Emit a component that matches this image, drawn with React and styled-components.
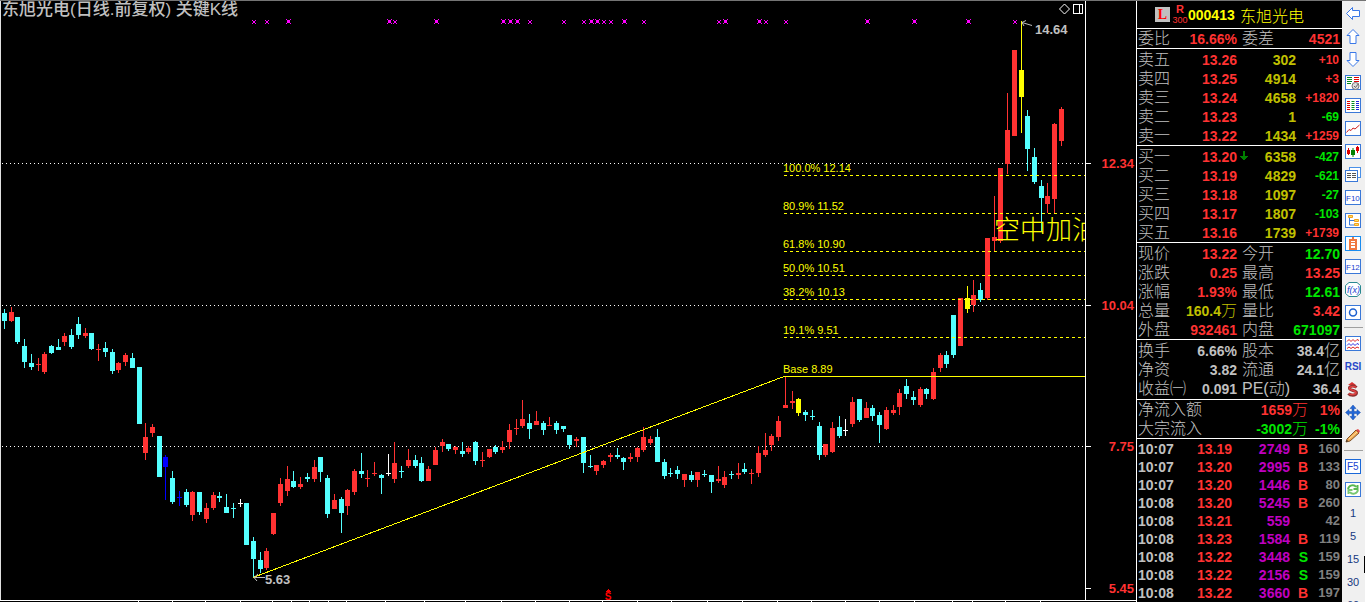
import React from "react";
import styled, { createGlobalStyle } from "styled-components";

const color = {
  red: "#ff3232",
  cyan: "#54ffff",
  green: "#00e600",
  olive: "#c0c000",
  yellow: "#ffff00",
  purple: "#c000c0",
  silver: "#c0c0c0",
  gray: "#808080",
  blue: "#0000ff",
  white: "#ffffff",
  magenta: "#ff00ff",
};

const sans = '"Liberation Sans", "Noto Sans CJK SC", sans-serif';

const GlobalStyle = createGlobalStyle`
  * { box-sizing: border-box; }
  body { margin: 0; background: #000; font-family: ${sans}; }
`;

/* ---------- chart data: [x, high, bodyTop, bodyBottom, low, kind] ---------- */
const kinds = { r: color.red, c: color.cyan, b: color.blue, w: color.white, y: color.yellow };

const candles = [
  [4, 309, 313, 321, 329, "c"], [11, 307, 312, 321, 322, "r"], [17, 317, 317, 342, 344, "c"],
  [24, 339, 346, 362, 368, "c"], [31, 354, 363, 367, 370, "c"], [38, 358, 364, 365, 371, "r"],
  [44, 352, 354, 372, 374, "r"], [51, 345, 346, 353, 354, "c"], [58, 339, 347, 350, 350, "c"],
  [64, 333, 336, 342, 346, "r"], [71, 329, 335, 347, 349, "c"], [78, 317, 324, 335, 339, "c"],
  [85, 328, 333, 336, 338, "r"], [91, 333, 333, 349, 350, "c"], [98, 344, 349, 350, 361, "r"],
  [105, 342, 348, 352, 357, "c"], [112, 349, 352, 371, 374, "c"], [118, 362, 363, 370, 373, "r"],
  [125, 353, 355, 362, 366, "r"], [132, 353, 358, 368, 368, "c"], [139, 367, 367, 424, 424, "c"],
  [145, 423, 437, 453, 460, "r"], [152, 424, 427, 433, 437, "r"], [159, 436, 436, 477, 477, "c"],
  [165, 455, 457, 467, 500, "b"], [172, 471, 478, 502, 504, "c"], [179, 491, 497, 498, 506, "b"],
  [186, 489, 492, 505, 507, "c"], [192, 491, 492, 515, 521, "r"], [199, 492, 492, 512, 515, "c"],
  [206, 503, 508, 519, 523, "r"], [213, 492, 495, 508, 510, "r"], [219, 492, 496, 498, 502, "c"],
  [226, 494, 507, 513, 513, "c"], [233, 503, 508, 509, 518, "c"], [240, 499, 503, 504, 507, "w"],
  [246, 503, 503, 545, 545, "c"], [253, 537, 541, 559, 577, "c"], [260, 552, 560, 569, 573, "c"],
  [266, 548, 551, 568, 570, "r"], [273, 513, 513, 534, 535, "r"], [280, 478, 484, 503, 506, "r"],
  [287, 466, 479, 491, 496, "r"], [293, 471, 481, 487, 488, "c"], [300, 477, 484, 487, 489, "r"],
  [307, 473, 477, 479, 482, "c"], [314, 460, 467, 479, 482, "r"], [320, 457, 457, 472, 482, "c"],
  [327, 475, 478, 514, 518, "c"], [334, 494, 500, 509, 509, "r"], [341, 497, 499, 513, 533, "c"],
  [347, 489, 490, 506, 515, "r"], [354, 469, 471, 492, 495, "r"], [361, 453, 471, 474, 478, "c"],
  [367, 470, 478, 479, 487, "r"], [374, 462, 473, 474, 476, "r"], [381, 474, 475, 478, 494, "c"],
  [388, 454, 473, 474, 476, "w"], [394, 442, 463, 479, 483, "r"], [401, 466, 471, 472, 478, "c"],
  [408, 449, 460, 466, 468, "r"], [415, 455, 460, 466, 468, "c"], [421, 457, 463, 481, 482, "c"],
  [428, 466, 469, 481, 481, "r"], [435, 447, 450, 465, 465, "r"], [442, 439, 442, 446, 452, "r"],
  [448, 444, 444, 449, 451, "c"], [455, 446, 447, 450, 454, "r"], [462, 442, 451, 454, 457, "c"],
  [468, 446, 448, 452, 454, "r"], [475, 441, 442, 461, 465, "c"], [482, 452, 460, 461, 467, "r"],
  [489, 449, 449, 457, 458, "r"], [495, 445, 447, 452, 454, "c"], [502, 441, 447, 450, 453, "r"],
  [509, 424, 430, 442, 449, "r"], [516, 419, 428, 429, 435, "r"], [522, 400, 419, 426, 428, "r"],
  [529, 414, 423, 429, 439, "c"], [536, 411, 421, 425, 425, "r"], [543, 421, 423, 430, 435, "c"],
  [549, 417, 425, 426, 426, "r"], [556, 421, 423, 430, 434, "c"], [563, 426, 426, 429, 432, "c"],
  [569, 435, 435, 445, 449, "c"], [576, 437, 439, 441, 447, "r"], [583, 437, 437, 463, 473, "c"],
  [590, 455, 466, 467, 468, "c"], [596, 465, 465, 471, 475, "r"], [603, 460, 461, 465, 468, "r"],
  [610, 453, 455, 457, 462, "r"], [617, 448, 455, 457, 459, "c"], [623, 457, 458, 462, 470, "c"],
  [630, 453, 457, 459, 462, "r"], [637, 447, 448, 457, 462, "r"], [643, 427, 437, 450, 452, "r"],
  [650, 436, 439, 443, 445, "r"], [657, 429, 437, 462, 462, "c"], [664, 459, 462, 476, 479, "c"],
  [670, 468, 473, 474, 477, "c"], [677, 466, 470, 474, 479, "c"], [684, 474, 474, 480, 487, "r"],
  [691, 471, 475, 480, 482, "c"], [697, 472, 472, 480, 487, "r"], [704, 470, 474, 475, 477, "c"],
  [711, 475, 475, 482, 493, "c"], [718, 466, 479, 481, 483, "r"], [724, 471, 477, 485, 488, "r"],
  [731, 471, 474, 475, 479, "c"], [738, 463, 473, 475, 479, "r"], [744, 463, 469, 472, 474, "c"],
  [751, 469, 473, 474, 484, "r"], [758, 446, 453, 473, 477, "r"], [765, 433, 450, 455, 457, "r"],
  [771, 434, 436, 445, 451, "r"], [778, 416, 421, 437, 441, "r"], [785, 377, 405, 408, 408, "r"],
  [792, 391, 401, 403, 409, "r"], [798, 398, 399, 413, 416, "y"], [805, 410, 412, 415, 421, "c"],
  [812, 410, 416, 417, 420, "c"], [819, 422, 426, 455, 460, "c"], [825, 444, 444, 455, 457, "r"],
  [832, 422, 428, 452, 453, "r"], [839, 416, 427, 436, 438, "c"], [845, 419, 430, 431, 436, "w"],
  [852, 397, 402, 424, 427, "r"], [859, 399, 399, 420, 422, "c"], [866, 402, 408, 418, 418, "r"],
  [872, 405, 408, 416, 421, "c"], [879, 412, 415, 425, 443, "c"], [886, 407, 410, 429, 430, "r"],
  [893, 405, 410, 413, 415, "r"], [899, 389, 393, 407, 415, "r"], [906, 379, 386, 394, 399, "c"],
  [913, 391, 397, 400, 405, "c"], [920, 387, 389, 405, 407, "r"], [926, 388, 389, 394, 399, "c"],
  [933, 368, 372, 399, 400, "r"], [940, 353, 355, 368, 372, "r"], [946, 351, 355, 364, 368, "c"],
  [953, 315, 315, 355, 358, "c"], [960, 298, 298, 346, 346, "r"], [967, 286, 298, 309, 313, "y"],
  [973, 280, 295, 305, 312, "r"], [980, 283, 290, 300, 302, "c"], [987, 238, 238, 298, 300, "r"],
  [994, 196, 237, 241, 251, "r"], [1000, 168, 168, 241, 243, "r"], [1007, 93, 130, 164, 174, "r"],
  [1014, 50, 50, 136, 136, "r"], [1021, 21, 70, 97, 133, "y"], [1027, 110, 116, 149, 171, "c"],
  [1034, 148, 157, 182, 184, "c"], [1041, 180, 186, 198, 231, "c"], [1047, 183, 196, 204, 213, "r"],
  [1054, 123, 124, 199, 213, "r"], [1061, 107, 109, 141, 146, "r"],
];

const smallMarks = [254, 267, 395, 530, 564, 584, 604, 611, 644, 719, 766, 786, 1015];
const largeMarks = [288, 389, 436, 503, 510, 517, 591, 597, 624, 725, 759, 867, 914, 968];

const priceTicks = [
  [163, "12.34"],
  [305, "10.04"],
  [446, "7.75"],
  [588, "5.45"],
];

const fibLines = [
  [175, "100.0% 12.14"],
  [213, "80.9% 11.52"],
  [251, "61.8% 10.90"],
  [275, "50.0% 10.51"],
  [299, "38.2% 10.13"],
  [337, "19.1% 9.51"],
];

const dateTicks = [
  138, 172, 205, 240, 272, 291, 309, 328, 346, 385, 424, 465, 501, 535, 569, 602, 637, 671,
  707, 742, 777, 811, 845, 879, 914, 952, 972, 1005, 1040,
];

/* ---------- chart ---------- */
const Shell = styled.div`
  display: flex;
  height: 100vh;
  min-height: 602px;
  overflow: hidden;
  border-top: 1px solid #747474;
  background: #000;
`;

const ChartPane = styled.main`
  position: relative;
  flex: 1;
  min-width: 0;
  overflow: hidden;
`;

const ChartTitle = styled.h1`
  position: absolute;
  top: 0;
  left: 2px;
  margin: 0;
  font: 500 17px/18px ${sans};
  color: ${color.silver};
  white-space: nowrap;
`;

const ChartSvg = styled.svg`
  display: block;
  width: 100%;
  height: auto;
`;

const FibText = styled.text`
  font: 11px ${sans};
  fill: ${color.yellow};
`;

const PriceText = styled.text`
  font: bold 13px ${sans};
  fill: ${(p) => p.$tone || color.silver};
`;

const EventText = styled.text`
  font: bold 10px ${sans};
  fill: #f00;
`;

const NoteText = styled.text`
  font: 300 26px "Noto Sans CJK SC", sans-serif;
  fill: ${color.yellow};
`;

function Candle({ data: [x, high, top, bottom, low, kind] }) {
  return (
    <g fill={kinds[kind]}>
      <rect x={x} y={high} width="1" height={low - high} />
      <rect x={x - 2} y={top} width="5" height={bottom - top} />
    </g>
  );
}

function Chart() {
  return (
    <ChartSvg viewBox="0 1 1136 601" role="img" aria-label="东旭光电 日线">
      <defs>
        <clipPath id="plot">
          <rect x="0" y="0" width="1085" height="600" />
        </clipPath>
      </defs>
      <g shapeRendering="crispEdges">
        <rect x="0" y="0" width="1" height="601" fill="#e0e0e0" />
        {priceTicks.slice(0, 3).map(([y]) => (
          <line key={y} x1="2" x2="1085" y1={y + 0.5} y2={y + 0.5} stroke="#fff" strokeDasharray="1 3" />
        ))}
        {candles.map((c) => (
          <Candle key={c[0]} data={c} />
        ))}
        {fibLines.map(([y]) => (
          <line key={y} x1="784" x2="1085" y1={y + 0.5} y2={y + 0.5} stroke="#ff0" strokeDasharray="3 3" />
        ))}
        <path d="M253 577.5L784 376.5H1085" fill="none" stroke="#ff0" />
        {smallMarks.map((x) => (
          <path key={x} d={`M${x - 2} 20h1v1h2v-1h1v1h-1v2h1v1h-1v-1h-2v1h-1v-1h1v-2h-1z`} fill={color.magenta} />
        ))}
        {largeMarks.map((x) => (
          <path key={x} d={`M${x - 2} 19h1v1h3v-1h1v1h-1v3h1v1h-1v-1h-3v1h-1v-1h1v-3h-1z`} fill={color.magenta} />
        ))}
        <rect x="1085" y="1" width="1" height="600" fill="#fff" />
        {priceTicks.map(([y]) => (
          <rect key={y} x="1086" y={y} width="5" height="1" fill="#fff" />
        ))}
        <rect x="0" y="600" width="1136" height="1" fill="#fff" />
        {dateTicks.map((x) => (
          <rect key={x} x={x} y="601" width="1" height="1" fill="#fff" />
        ))}
        <path d="M1073.5 4.5h9v9h-9zM1079.5 4.5v9" fill="none" stroke="#fff" />
        <path d="M608 589h1v1h1v1h1v1h-5v-1h1v-1h1z" fill="#f00" />
      </g>
      <path d="M1064.5 4L1069.500 9L1064.500 14L1059.500 9z" fill="none" stroke="#fff" />
      <path d="M1022 22.500L1032 25.500M1026 20.500L1022 22.500L1024 26" fill="none" stroke={color.silver} />
      <path d="M254 577.500H265M258 574L254 577.500L257 581" fill="none" stroke={color.silver} />
      {fibLines.map(([y, label]) => (
        <FibText key={y} x="783" y={y - 3}>{label}</FibText>
      ))}
      <FibText x="783" y="373">Base 8.89</FibText>
      <EventText x="608" y="600" textAnchor="middle">S</EventText>
      <g clipPath="url(#plot)">
        <NoteText x="994" y="239">空中加油</NoteText>
      </g>
      <PriceText x="1035" y="34">14.64</PriceText>
      <PriceText x="265" y="584">5.63</PriceText>
      {priceTicks.map(([y, label]) => (
        <PriceText key={y} x="1134" y={y + 5} textAnchor="end" $tone={color.red}>{label}</PriceText>
      ))}
    </ChartSvg>
  );
}

/* ---------- quote panel ---------- */
const Quote = styled.aside`
  flex: 0 0 206px;
  border-left: 1px solid #fff;
  overflow: hidden;
`;

const QuoteHead = styled.header`
  display: flex;
  align-items: center;
  height: 28px;
  padding: 0 0 0 18px;
  border-bottom: 1px solid #fff;
  color: ${color.yellow};
`;

const MarginBadge = styled.span`
  width: 15px;
  height: 15px;
  background: ${color.silver};
  color: #f00;
  font: bold 14px/15px "Liberation Serif", serif;
  text-align: center;
`;

const IndexBadge = styled.span`
  display: grid;
  row-gap: 1px;
  width: 18px;
  padding-left: 2px;
  color: ${color.red};
  font-size: 9px;
  line-height: 10px;
  text-align: center;

  b { font-size: 11px; }
`;

const StockCode = styled.b`
  width: 52px;
  font-size: 14px;
`;

const StockName = styled.span`
  font-size: 16px;
  font-weight: 300;
`;

const Section = styled.section`
  padding: ${(p) => (p.$tight ? 0 : 1)}px 0 ${(p) => p.$bottom || 0}px 1px;
  border-bottom: ${(p) => (p.$last ? 0 : 1)}px solid #fff;
`;

const Table = styled.table`
  width: 100%;
  table-layout: fixed;
  border-collapse: collapse;
  white-space: nowrap;
`;

const Row = styled.tr`
  height: ${(p) => p.$height || 19}px;
`;

const Label = styled.th`
  padding: 0 0 0 ${(p) => p.$indent || 0}px;
  color: ${color.silver};
  font-size: 16px;
  font-weight: 300;
  line-height: 18px;
  text-align: left;
`;

const Value = styled.td`
  padding: 0 ${(p) => p.$inset || 0}px 0 0;
  color: ${(p) => p.$tone};
  font-size: ${(p) => p.$size || 14}px;
  font-weight: bold;
  line-height: 18px;
  text-align: ${(p) => p.$align || "right"};
`;

const Unit = styled.span`
  font-size: 16px;
  font-weight: 300;
  line-height: 16px;
`;

const withUnit = (text) =>
  /[万亿]$/.test(text) ? (
    <>
      {text.slice(0, -1)}
      <Unit>{text.slice(-1)}</Unit>
    </>
  ) : (
    text
  );

const Cols = ({ widths }) => (
  <colgroup>
    {widths.map((w, i) => (
      <col key={i} style={w ? { width: w } : undefined} />
    ))}
  </colgroup>
);

const asks = [
  ["卖五", "13.26", "302", "+10"],
  ["卖四", "13.25", "4914", "+3"],
  ["卖三", "13.24", "4658", "+1820"],
  ["卖二", "13.23", "1", "-69"],
  ["卖一", "13.22", "1434", "+1259"],
];
const bids = [
  ["买一", "13.20", "6358", "-427", true],
  ["买二", "13.19", "4829", "-621"],
  ["买三", "13.18", "1097", "-27"],
  ["买四", "13.17", "1807", "-103"],
  ["买五", "13.16", "1739", "+1739"],
];
const ratio = [["委比", "16.66%", color.red, "委差", "4521", color.red]];
const stats = [
  ["现价", "13.22", color.red, "今开", "12.70", color.green],
  ["涨跌", "0.25", color.red, "最高", "13.25", color.red],
  ["涨幅", "1.93%", color.red, "最低", "12.61", color.green],
  ["总量", "160.4万", color.olive, "量比", "3.42", color.red],
  ["外盘", "932461", color.red, "内盘", "671097", color.green],
];
const basics = [
  ["换手", "6.66%", color.silver, "股本", "38.4亿", color.silver],
  ["净资", "3.82", color.silver, "流通", "24.1亿", color.silver],
  ["收益㈠", "0.091", color.silver, "PE(动)", "36.4", color.silver],
];
const flows = [
  ["净流入额", "1659万", "1%", color.red],
  ["大宗流入", "-3002万", "-1%", color.green],
];
const trades = [
  ["10:07", "13.19", "2749", "B", "160"],
  ["10:07", "13.20", "2995", "B", "133"],
  ["10:07", "13.20", "1446", "B", "80"],
  ["10:08", "13.20", "5245", "B", "260"],
  ["10:08", "13.21", "559", "", "42"],
  ["10:08", "13.23", "1584", "B", "119"],
  ["10:08", "13.22", "3448", "S", "159"],
  ["10:08", "13.22", "2156", "S", "159"],
  ["10:08", "13.22", "3660", "B", "197"],
];

const DownMark = () => (
  <svg width="9" height="11" viewBox="0 0 9 11" aria-label="下跌">
    <path d="M3 0h2v5h3v1h-1v1h-1v1h-1v1h-2v-1h-1v-1h-1v-1h-1v-1h3z" fill="#008000" />
  </svg>
);

const OrderBook = ({ rows }) => (
  <Section>
    <Table>
      <Cols widths={[40, 59, 14, 45, 0]} />
      <tbody>
        {rows.map(([label, price, volume, delta, falling]) => (
          <Row key={label}>
            <Label scope="row">{label}</Label>
            <Value $tone={color.red}>{price}</Value>
            <Value $align="center">{falling && <DownMark />}</Value>
            <Value $tone={color.olive}>{volume}</Value>
            <Value $size={12} $inset={3} $tone={delta[0] === "+" ? color.red : color.green}>{delta}</Value>
          </Row>
        ))}
      </tbody>
    </Table>
  </Section>
);

const Pairs = ({ rows, ...rest }) => (
  <Section {...rest}>
    <Table>
      <Cols widths={[40, 59, 46, 0]} />
      <tbody>
        {rows.map(([a, av, at, b, bv, bt]) => (
          <Row key={a}>
            <Label scope="row">{a}</Label>
            <Value $tone={at}>{withUnit(av)}</Value>
            <Label scope="row" $indent={5}>{b}</Label>
            <Value $inset={2} $tone={bt}>{withUnit(bv)}</Value>
          </Row>
        ))}
      </tbody>
    </Table>
  </Section>
);

/* ---------- toolbar ---------- */
const Toolbar = styled.nav`
  position: relative;
  flex: 0 0 24px;
  display: flex;
  flex-direction: column;
  overflow: hidden;
  padding-top: 1px;
  border-right: 1px solid #fff;
  background: #f0f0f0;
`;

const Tool = styled.button`
  display: grid;
  place-items: center;
  flex: 0 0 23px;
  padding: 0 1px 0 0;
  border: 0;
  background: none;
  font: ${(p) => (p.$bold ? "bold 10px" : "11px")}/12px ${sans};
  color: ${(p) => (p.$bold ? "#2848c8" : "#17397f")};
`;

const Divider = styled.hr`
  flex: 0 0 1px;
  width: 19px;
  margin: 3px 2px 4px;
  border: 0;
  background: #a0a0a0;
`;

const ScrollMark = styled.span`
  position: absolute;
  top: 555px;
  right: 0;
  width: 1px;
  height: 17px;
  background: #000;
`;

const Framed = ({ children, stroke = "#3a78d8" }) => (
  <>
    <rect x=".5" y=".5" width="15" height="14" fill="#fff" stroke={stroke} />
    {children}
  </>
);

const GlyphText = styled.text`
  font: ${(p) => p.$font || `8px ${sans}`};
  fill: #1c3fd0;
`;

const arrowBlue = { fill: "#fff", stroke: "#3a78e8", strokeWidth: 1 };

const tools = [
  ["后退", <path d="M1.5 7.500L7.500 1.500V4.500H14.500V10.500H7.500V13.500z" {...arrowBlue} />],
  ["上移", <path d="M8 .5L14 6.500H11V14.500H5V6.500H2z" {...arrowBlue} />],
  ["下移", <path d="M8 14.500L14 8.500H11V.5H5V8.500H2z" {...arrowBlue} />],
  ["报价", <Framed>
    <path d="M2 2.500h5M2 4.500h5M2 6.500h5M2 8.500h4" stroke="#008a20" />
    <path d="M9 2.500h5M9 4.500h5M9 6.500h5" stroke="#e00000" />
    <circle cx="10.500" cy="11" r="3.500" fill="#ddd" stroke="#777" /><path d="M9 11l1.500 1.500 3-4" fill="none" stroke="#666" />
  </Framed>],
  ["列表", <Framed>
    <path d="M2 3.500h3M2 5.500h3M2 7.500h3M2 9.500h3M2 11.500h3" stroke="#e00000" />
    <path d="M6.500 3.500h3M6.500 5.500h3M6.500 7.500h3M6.500 9.500h3M6.500 11.500h3" stroke="#008a20" />
    <path d="M11 3.500h3M11 5.500h3M11 7.500h3M11 9.500h3M11 11.500h3" stroke="#2020e0" />
  </Framed>],
  ["分时", <Framed><path d="M1.500 11.500L4 8.500L6 9.500L8 7L10 8L14.500 4" fill="none" stroke="#d02020" /></Framed>],
  ["K线", <Framed>
    <path d="M3.500 4v7M12.500 2v7" stroke="#e00000" /><path d="M2 6h3v4H2zM11 3h3v4h-3z" fill="#e00000" />
    <path d="M8 4v9" stroke="#008000" /><path d="M6 6h4v5H6z" fill="#008000" />
  </Framed>],
  ["多窗", <>
    <rect x="4.500" y=".5" width="11" height="10" fill="#fff" stroke="#4a90e8" />
    <rect x=".5" y="3.500" width="12" height="11" fill="#fff" stroke="#3a78d8" />
    <path d="M2 6.500h4M7 6.500h4M2 8.500h4M7 8.500h4M2 10.500h4M7 10.500h4" stroke="#555" />
  </>],
  ["F10", <Framed><GlyphText x="1" y="11">F10</GlyphText></Framed>],
  ["树形", <Framed>
    <path d="M4.500 5v7h5M4.500 7.500h5" fill="none" stroke="#3a78d8" />
    <path d="M3.500 2.500h4v2h-4zM9.500 6.500h4v2h-4zM9.500 10.500h4v2h-4z" fill="#ffe060" stroke="#f0a020" />
  </Framed>],
  ["自选", <Framed stroke="#1a8cf0">
    <path d="M8 1v2M5 4h6v9h-6z" fill="#fff" stroke="#f07840" strokeWidth="2" /><path d="M5 6.500h6M5 9.500h6" stroke="#f07840" />
  </Framed>],
  ["F12", <Framed><GlyphText x="1" y="11">F12</GlyphText></Framed>],
  ["公式", <>
    <path d="M4 .5h8l3.500 3v8l-3.500 3H4l-3.500-3v-8z" fill="#fff" stroke="#2a8890" />
    <GlyphText x="2" y="11" $font={`italic 9px ${sans}`}>f(x)</GlyphText>
  </>],
  ["圆环", <Framed><circle cx="8" cy="7.500" r="3.500" fill="none" stroke="#1c60d0" strokeWidth="1.500" /></Framed>],
  null,
  ["指标", <Framed>
    <path d="M2 5.500l2-2 2 2 2-2 2 2 2-2 2 1" fill="none" stroke="#e02020" />
    <path d="M2 9.500l2-2 2 2 2-2 2 2 2-2 2 1" fill="none" stroke="#3030e0" />
    <path d="M2 12.500l2-1.500 2 1.500 2-1.500 2 1.500 2-1.500 2 1" fill="none" stroke="#e02020" />
  </Framed>],
  ["RSI", "RSI"],
  ["除权", <>
    <path d="M7 0L11 3H3z" fill="#d83030" />
    <path d="M11.500 5.500C9 3 4 4 4.500 6.500C5 9 12 8 11.500 11C11 14 5 13.500 3.500 11.500" fill="none" stroke="#8c3030" strokeWidth="3" />
    <path d="M11 5.500C9 3.500 4.500 4.500 4.500 6.500C5 8.500 11.500 8 11 11C10.500 13 5.500 13 4 11.500" fill="none" stroke="#e04040" strokeWidth="1.500" />
  </>],
  ["移动", <path d="M8 0l3 3.500H9V6.500H12V4.500L15.500 7.500L12 10.500V8.500H9V11.500H11L8 15L5 11.500H7V8.500H4V10.500L.5 7.500L4 4.500V6.500H7V3.500H5z" fill="#2468d8" stroke="#174ca8" strokeWidth=".5" />],
  ["画线", <>
    <path d="M2 11L11 2L14 5L5 13L1 14z" fill="#f0a850" stroke="#80542c" />
    <path d="M11 2l2-1 2 2-1 2z" fill="#e04848" /><path d="M1 14l1-2 1 1z" fill="#222" /><path d="M4 11l8-7" stroke="#ffe0a0" />
  </>],
  null,
  ["F5", <Framed stroke="#1a68d8"><GlyphText x="2" y="11" $font={`10px ${sans}`}>F5</GlyphText></Framed>],
  ["刷新", <Framed>
    <path d="M3 7C4 3 9 2 11 5M12.500 3v4h-4" fill="none" stroke="#58b850" strokeWidth="2" />
    <path d="M13 8C12 12 7 13 5 10M3.500 12V8h4" fill="none" stroke="#78c870" strokeWidth="2" />
  </Framed>],
  ["1分钟", "1"],
  ["5分钟", "5"],
  ["15分钟", "15"],
  ["30分钟", "30"],
  ["60分钟", "60"],
];

export default function App() {
  return (
    <>
      <GlobalStyle />
      <Shell>
        <ChartPane>
          <Chart />
          <ChartTitle>东旭光电(日线.前复权) 关键K线</ChartTitle>
        </ChartPane>

        <Quote>
          <QuoteHead>
            <MarginBadge>L</MarginBadge>
            <IndexBadge><b>R</b>300</IndexBadge>
            <StockCode>000413</StockCode>
            <StockName>东旭光电</StockName>
          </QuoteHead>
          <Pairs rows={ratio} $tight />
          <OrderBook rows={asks} />
          <OrderBook rows={bids} />
          <Pairs rows={stats} />
          <Pairs rows={basics} $bottom={1} />
          <Section $tight>
            <Table>
              <Cols widths={[70, 100, 0]} />
              <tbody>
                {flows.map(([label, amount, share, tone]) => (
                  <Row key={label}>
                    <Label scope="row">{label}</Label>
                    <Value $tone={tone}>{withUnit(amount)}</Value>
                    <Value $tone={tone} $inset={2}>{share}</Value>
                  </Row>
                ))}
              </tbody>
            </Table>
          </Section>
          <Section $last>
            <Table>
              <Cols widths={[45, 49, 58, 20, 0]} />
              <tbody>
                {trades.map(([time, price, volume, side, count], i) => (
                  <Row key={i} $height={18}>
                    <Value $align="left" $tone={color.silver}>{time}</Value>
                    <Value $tone={color.red}>{price}</Value>
                    <Value $tone={color.purple}>{volume}</Value>
                    <Value $inset={2} $tone={side === "S" ? color.green : color.red}>{side}</Value>
                    <Value $size={13} $inset={2} $tone={color.gray}>{count}</Value>
                  </Row>
                ))}
              </tbody>
            </Table>
          </Section>
        </Quote>

        <Toolbar aria-label="工具栏">
          {tools.map((tool, i) => {
            if (!tool) return <Divider key={i} />;
            const [name, face] = tool;
            const isText = typeof face === "string";
            return (
              <Tool key={name} type="button" aria-label={name} $bold={face === "RSI"}>
                {isText ? face : <svg width="16" height="15" viewBox="0 0 16 15" aria-hidden="true">{face}</svg>}
              </Tool>
            );
          })}
          <ScrollMark />
        </Toolbar>
      </Shell>
    </>
  );
}
